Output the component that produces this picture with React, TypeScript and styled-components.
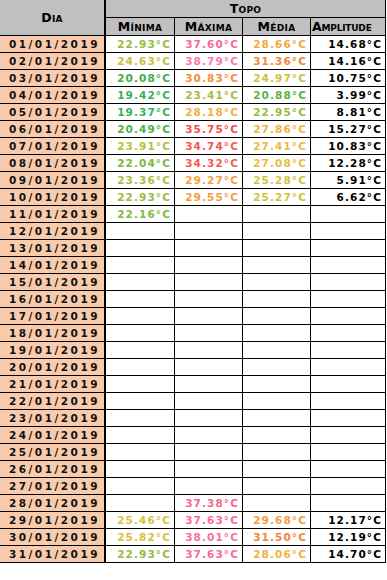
import React from "react";
import styled, { createGlobalStyle } from "styled-components";

const GlobalStyle = createGlobalStyle`
  html, body {
    margin: 0;
    padding: 0;
    background: #ffffff;
  }
  body {
    font-family: "DejaVu Sans", "Liberation Sans", sans-serif;
  }
`;

// colour scale used by the sheet (green -> yellow -> orange -> red -> pink)
const stops: [number, number[]][] = [
  [19, [45, 180, 110]],
  [20, [62, 174, 72]],
  [22, [122, 185, 63]],
  [24, [184, 192, 60]],
  [25.5, [214, 194, 58]],
  [27.5, [238, 186, 60]],
  [29.5, [245, 158, 59]],
  [31.5, [245, 132, 59]],
  [34.5, [246, 88, 80]],
  [35.8, [248, 76, 74]],
  [37.5, [249, 104, 142]],
  [39, [251, 124, 186]],
];

const tempColor = (t: number) => {
  if (t <= stops[0][0]) return `rgb(${stops[0][1].join(",")})`;
  for (let i = 1; i < stops.length; i++) {
    const [t1, c1] = stops[i];
    const [t0, c0] = stops[i - 1];
    if (t <= t1) {
      const k = (t - t0) / (t1 - t0);
      const c = c0.map((v, j) => Math.round(v + (c1[j] - v) * k));
      return `rgb(${c.join(",")})`;
    }
  }
  return `rgb(${stops[stops.length - 1][1].join(",")})`;
};

type Row = (number | null)[];

// min, max, media, amplitude
const data: Row[] = [
  [22.93, 37.6, 28.66, 14.68],
  [24.63, 38.79, 31.36, 14.16],
  [20.08, 30.83, 24.97, 10.75],
  [19.42, 23.41, 20.88, 3.99],
  [19.37, 28.18, 22.95, 8.81],
  [20.49, 35.75, 27.86, 15.27],
  [23.91, 34.74, 27.41, 10.83],
  [22.04, 34.32, 27.08, 12.28],
  [23.36, 29.27, 25.28, 5.91],
  [22.93, 29.55, 25.27, 6.62],
  [22.16, null, null, null],
  ...Array.from({ length: 16 }, () => [null, null, null, null] as Row),
  [null, 37.38, null, null],
  [25.46, 37.63, 29.68, 12.17],
  [25.82, 38.01, 31.5, 12.19],
  [22.93, 37.63, 28.06, 14.7],
];

const Sheet = styled.div`
  width: 386px;
  display: flex;
  flex-direction: column;
`;

const HeadBlock = styled.div`
  display: grid;
  grid-template-columns: 106px 69px 68px 68px 75px;
  grid-template-rows: 18px 18px;
  background: #c0c0c0;
`;

const HeadCell = styled.div<{ $span?: boolean; $thick?: boolean }>`
  box-sizing: border-box;
  display: flex;
  align-items: center;
  justify-content: center;
  border-right: ${({ $thick }) => ($thick ? "2px" : "1px")} solid #000;
  border-bottom: 1px solid #000;
  font-weight: bold;
  font-size: 12.5px;
  font-variant: small-caps;
  letter-spacing: 0.3px;
  color: #000;
  white-space: nowrap;
  overflow: visible;
  ${({ $span }) => ($span ? "grid-row: 1 / span 2;" : "")}
`;

const TopHead = styled(HeadCell)`
  grid-column: 2 / span 4;
`;

const WideHead = styled(HeadCell)`
  letter-spacing: -0.2px;
  justify-content: flex-start;
  padding-left: 1px;
`;

const DataRow = styled.div`
  display: grid;
  grid-template-columns: 106px 69px 68px 68px 75px;
  height: 17px;
`;

const DayCell = styled.div`
  box-sizing: border-box;
  background: #f8cbad;
  border-right: 2px solid #000;
  border-bottom: 1px solid #000;
  display: flex;
  align-items: center;
  justify-content: flex-end;
  padding-right: 4px;
  font-weight: bold;
  font-size: 10.5px;
  letter-spacing: 2.5px;
  color: #111;
`;

const ValueCell = styled.div<{ $color?: string }>`
  box-sizing: border-box;
  border-right: 1px solid #000;
  border-bottom: 1px solid #000;
  display: flex;
  align-items: center;
  justify-content: flex-end;
  padding-right: 3px;
  font-weight: bold;
  font-size: 10.5px;
  letter-spacing: 1.1px;
  color: ${({ $color }) => $color || "#000"};
  white-space: nowrap;
`;

const fmt = (v: number) => `${v.toFixed(2)}°C`;

const App = () => {
  return (
    <>
      <GlobalStyle />
      <Sheet>
        <HeadBlock>
          <HeadCell $span $thick>Dia</HeadCell>
          <TopHead>Topo</TopHead>
          <HeadCell>Mínima</HeadCell>
          <HeadCell>Máxima</HeadCell>
          <HeadCell>Média</HeadCell>
          <WideHead>Amplitude</WideHead>
        </HeadBlock>
        {data.map((row, i) => {
          const day = String(i + 1).padStart(2, "0");
          return (
            <DataRow key={day}>
              <DayCell>{`${day}/01/2019`}</DayCell>
              {row.slice(0, 3).map((v, j) => (
                <ValueCell key={j} $color={v === null ? undefined : tempColor(v)}>
                  {v === null ? "" : fmt(v)}
                </ValueCell>
              ))}
              <ValueCell>{row[3] === null ? "" : fmt(row[3])}</ValueCell>
            </DataRow>
          );
        })}
      </Sheet>
    </>
  );
};

export default App;
